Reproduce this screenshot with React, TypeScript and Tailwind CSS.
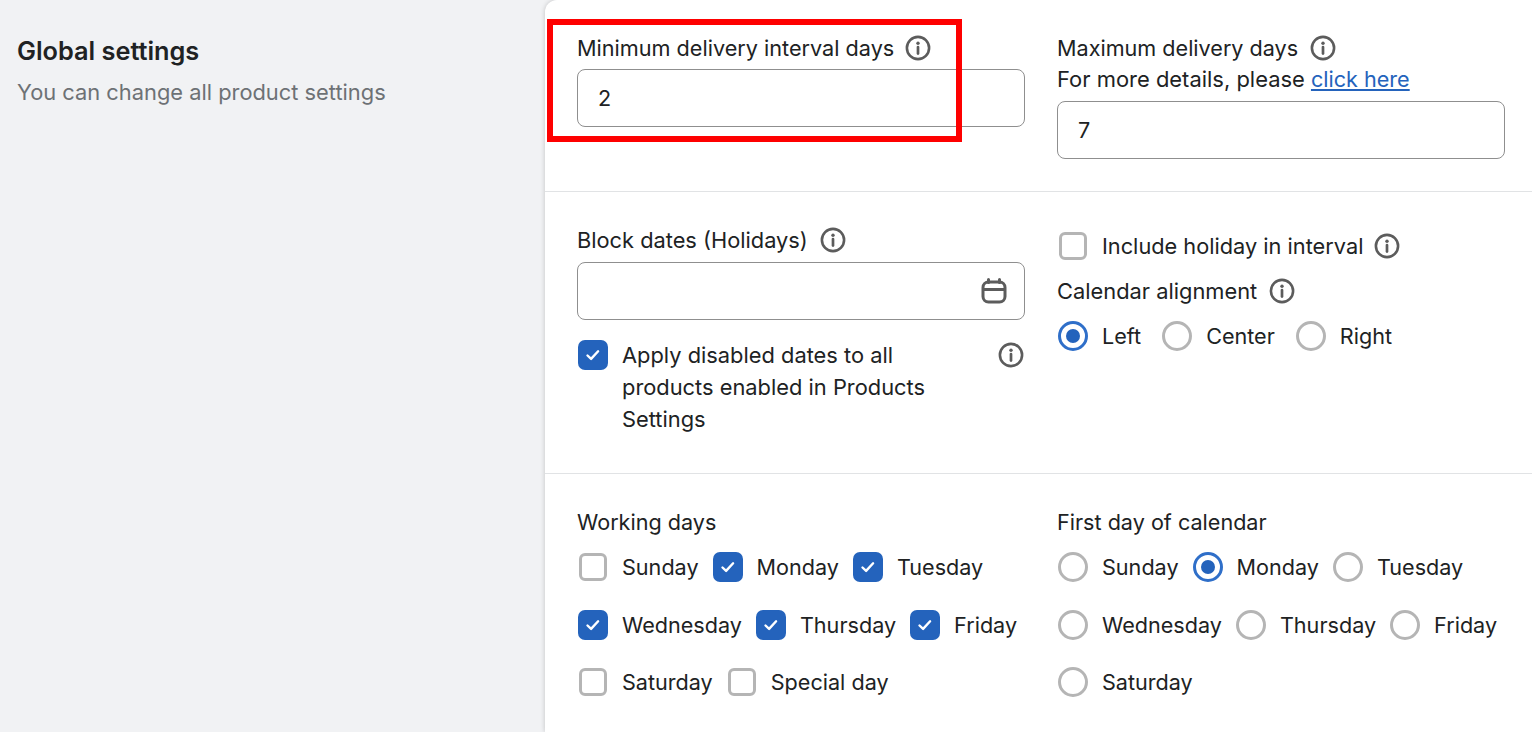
function InfoIcon() {
  return (
    <svg width="26" height="26" viewBox="0 0 26 26" fill="none" className="shrink-0">
      <circle cx="13" cy="13" r="11.1" stroke="#5c5c5c" strokeWidth="2.6" />
      <circle cx="13" cy="8.2" r="1.7" fill="#5c5c5c" />
      <path d="M13 12v6.6" stroke="#5c5c5c" strokeWidth="2.7" strokeLinecap="round" />
    </svg>
  );
}

function CalendarIcon() {
  return (
    <svg width="26" height="26" viewBox="0 0 26 26" fill="none">
      <rect x="2" y="4" width="22" height="20" rx="5.5" stroke="#5c5c5c" strokeWidth="3" />
      <path d="M2.5 11.5h21" stroke="#5c5c5c" strokeWidth="3" />
      <path d="M7.5 1.5v3M18.5 1.5v3" stroke="#5c5c5c" strokeWidth="3" strokeLinecap="round" />
    </svg>
  );
}

function CheckedBox() {
  return (
    <span className="ml-px w-[30px] h-[30px] rounded-[7px] bg-[#2463bc] flex items-center justify-center shrink-0">
      <svg width="16" height="16" viewBox="0 0 16 16" fill="none">
        <path d="M2.5 8.5l3.6 3.4 7-7.6" stroke="#fff" strokeWidth="2.4" strokeLinecap="round" strokeLinejoin="round" />
      </svg>
    </span>
  );
}

function Checkbox({ label, checked = false }: { label: string; checked?: boolean }) {
  return (
    <label className="flex items-center gap-[14px] h-8">
      {checked ? (
        <CheckedBox />
      ) : (
        <span className="ml-[2px] mr-px w-[28px] h-[28px] rounded-[6px] bg-white border-[3px] border-[#b5b5b5] shrink-0" />
      )}
      <span>{label}</span>
    </label>
  );
}

function Radio({ label, checked = false }: { label: string; checked?: boolean }) {
  return (
    <label className="flex items-center gap-[14px] h-8">
      {checked ? (
        <span className="ml-px w-[30px] h-[30px] rounded-full bg-white border-[3px] border-[#2f6fc9] flex items-center justify-center shrink-0">
          <span className="w-[14px] h-[14px] rounded-full bg-[#2463bc]" />
        </span>
      ) : (
        <span className="ml-px w-[30px] h-[30px] rounded-full bg-white border-[3px] border-[#b5b5b5] shrink-0" />
      )}
      <span>{label}</span>
    </label>
  );
}

function Label({ text, size }: { text: string; size?: string }) {
  return (
    <div className="flex items-center gap-3 h-8">
      <span className={size}>{text}</span>
      <InfoIcon />
    </div>
  );
}

function TextInput({ value }: { value?: string }) {
  return (
    <div className="h-[58px] rounded-lg border border-[#8f8f8f] bg-white flex items-center justify-between pl-5 pr-[17px]">
      <span>{value}</span>
      {value === undefined && <CalendarIcon />}
    </div>
  );
}

export default function App() {
  return (
    <div
      className="w-[1532px] h-[732px] overflow-hidden bg-[#f1f2f4] flex text-[21.6px] leading-8 text-[#202223] relative"
      style={{ fontFamily: "Inter, sans-serif" }}
    >
      {/* Left column */}
      <div className="w-[545px] shrink-0 pl-[17px] pt-[35px]">
        <h2 className="font-semibold text-[25.3px] leading-8">Global settings</h2>
        <p className="text-[21.85px] text-[#6d7175] mt-[9px]">You can change all product settings</p>
      </div>

      {/* Settings card */}
      <div className="flex-1 bg-white rounded-tl-xl shadow-[0_0_5px_rgba(0,0,0,0.2)]">
        <div className="grid grid-cols-[448px_448px] gap-x-8 pl-8 pt-8 pb-8 border-b border-[#e1e3e5]">
          <div>
            <div className="mb-[5px] flex items-center gap-[11px] h-8">
              <span className="text-[21.65px]">Minimum delivery interval days</span>
              <InfoIcon />
            </div>
            <TextInput value="2" />
          </div>
          <div>
            <Label text="Maximum delivery days" />
            <div className="-mt-px mb-[6px]">
              <span className="text-[21.95px]">For more details, please</span>{" "}
              <a className="text-[#2463bc] underline">click here</a>
            </div>
            <TextInput value="7" />
          </div>
        </div>

        <div className="grid grid-cols-[448px_448px] gap-x-8 pl-8 pt-8 h-[282px] border-b border-[#e1e3e5]">
          <div>
            <div className="mb-[6px]">
              <Label text="Block dates (Holidays)" size="text-[21.8px]" />
            </div>
            <TextInput />
            <div className="flex items-start justify-between mt-5 pr-px">
              <div className="flex gap-[14px]">
                <CheckedBox />
                <span className="w-[330px] -mt-px text-[21.85px]">
                  Apply disabled dates to all products enabled in Products Settings
                </span>
              </div>
              <div className="mt-[2px]">
                <InfoIcon />
              </div>
            </div>
          </div>
          <div>
            <div className="flex items-center gap-[11px] mt-[6px]">
              <div className="text-[21.75px]">
                <Checkbox label="Include holiday in interval" />
              </div>
              <InfoIcon />
            </div>
            <div className="mt-[13px] mb-[13px]">
              <Label text="Calendar alignment" size="text-[21.85px]" />
            </div>
            <div className="flex gap-[20px]">
              <Radio label="Left" checked />
              <Radio label="Center" />
              <Radio label="Right" />
            </div>
          </div>
        </div>

        <div className="grid grid-cols-[448px_448px] gap-x-8 pl-8 pt-8">
          <div>
            <div className="mb-[13px]">Working days</div>
            <div className="flex flex-wrap gap-x-[13px] gap-y-[25.5px]">
              <Checkbox label="Sunday" />
              <Checkbox label="Monday" checked />
              <Checkbox label="Tuesday" checked />
              <Checkbox label="Wednesday" checked />
              <Checkbox label="Thursday" checked />
              <Checkbox label="Friday" checked />
              <Checkbox label="Saturday" />
              <Checkbox label="Special day" />
            </div>
          </div>
          <div>
            <div className="mb-[13px]">First day of calendar</div>
            <div className="flex flex-wrap gap-x-[13px] gap-y-[25.5px]">
              <Radio label="Sunday" />
              <Radio label="Monday" checked />
              <Radio label="Tuesday" />
              <Radio label="Wednesday" />
              <Radio label="Thursday" />
              <Radio label="Friday" />
              <Radio label="Saturday" />
            </div>
          </div>
        </div>
      </div>

      {/* Red highlight drawn over the screenshot */}
      <div className="absolute left-[547px] top-[19px] w-[415px] h-[123px] border-[6px] border-[#fe0000]" />
    </div>
  );
}
